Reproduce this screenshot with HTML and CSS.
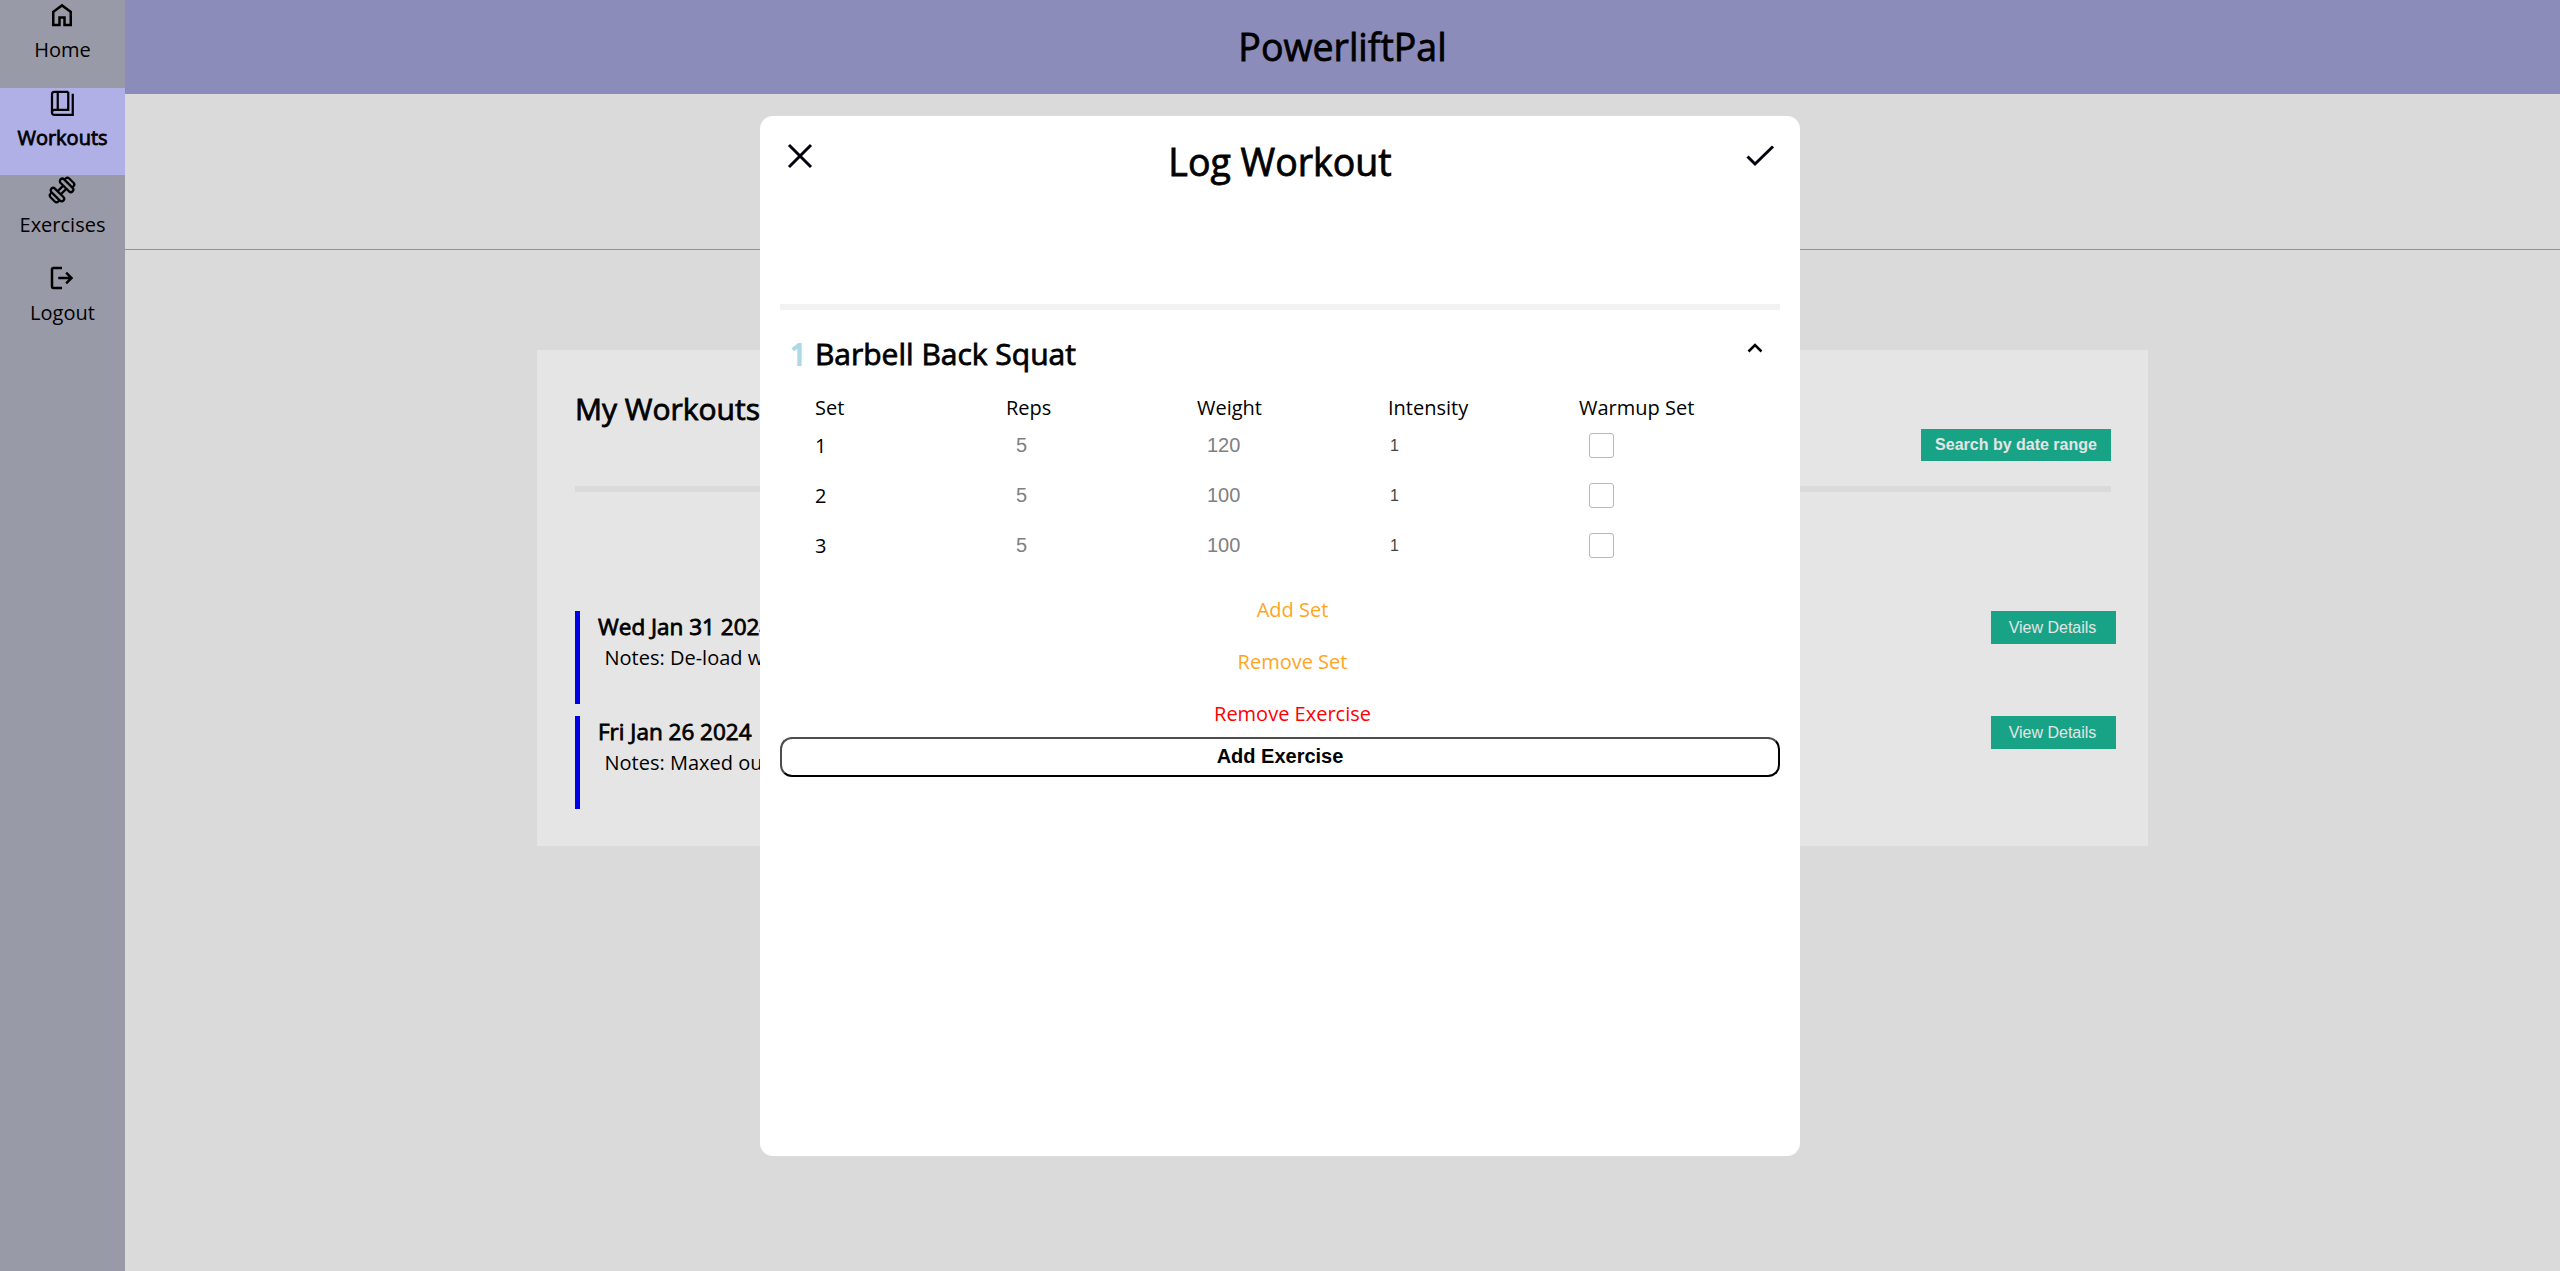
FILE: index.html
```html
<!DOCTYPE html>
<html lang="en">
<head>
<meta charset="utf-8">
<title>PowerliftPal</title>
<link rel="stylesheet" href="styles.css">
</head>
<body>
<div class="app">
  <nav class="sidebar">
    <a class="nav-item"><svg class="nav-icon" viewBox="0 0 24 24"><path d="M6 19h3v-6h6v6h3v-9l-6-4.500L6 10v9Zm-2 2V9l8-6l8 6v12h-7v-6h-2v6H4Z"/></svg><span>Home</span></a>
    <a class="nav-item active"><svg class="nav-icon line" viewBox="0 0 24 24"><path d="M17 3H6q-2 0-2 2v14.500M17 3v14.500H6q-2 0-2 2T6 21.400H20.600V4.500M8.600 3v14.500"/></svg><span>Workouts</span></a>
    <a class="nav-item"><svg class="nav-icon line" viewBox="0 0 24 24"><g transform="rotate(-45 12 12)"><rect x="4.800" y="5.200" width="4" height="13.600" rx="2"/><rect x="15.200" y="5.200" width="4" height="13.600" rx="2"/><path d="M8.800 10.200h6.400M8.800 13.800h6.400M4.800 7.600H3.400q-2 0-2 2v4.800q0 2 2 2h1.400M19.200 7.600h1.400q2 0 2 2v4.800q0 2-2 2h-1.400"/></g></svg><span>Exercises</span></a>
    <a class="nav-item"><svg class="nav-icon" viewBox="0 0 24 24"><path d="M5 21q-.825 0-1.412-.587T3 19V5q0-.825.588-1.412T5 3h7v2H5v14h7v2H5Zm11-4l-1.375-1.450l2.550-2.550H9v-2h8.175l-2.550-2.550L16 7l5 5l-5 5Z"/></svg><span>Logout</span></a>
  </nav>
  <div class="content">
    <header class="topbar"><h1>PowerliftPal</h1></header>
    <div class="toolbar"></div>
    <main class="card">
      <div class="card-head"><h2>My Workouts</h2><button class="btn search">Search by date range</button></div>
      <div class="workouts">
        <div class="workout"><div class="info"><h3>Wed Jan 31 2024</h3><p>Notes: De-load week</p></div><button class="btn view">View Details</button></div>
        <div class="workout"><div class="info"><h3>Fri Jan 26 2024</h3><p>Notes: Maxed out</p></div><button class="btn view">View Details</button></div>
      </div>
    </main>
  </div>
</div>
<section class="modal">
  <div class="modal-head">
    <svg class="head-icon" viewBox="0 0 40 40"><path d="M9 9L31 31M31 9L9 31"/></svg>
    <h1>Log Workout</h1>
    <svg class="head-icon" viewBox="0 0 40 40"><path d="M7.500 20.500l7.500 7.500L33 10.500"/></svg>
  </div>
  <div class="exercise-title"><h2><span class="num">1</span> Barbell Back Squat</h2><svg class="chevron" viewBox="0 0 16 10"><path d="M1.500 8.500L8 2l6.500 6.500"/></svg></div>
  <div class="sets head"><span>Set</span><span>Reps</span><span>Weight</span><span>Intensity</span><span>Warmup Set</span></div>
  <div class="sets row"><span>1</span><span class="value">5</span><span class="value">120</span><span class="level">1</span><span class="check"></span></div>
  <div class="sets row"><span>2</span><span class="value">5</span><span class="value">100</span><span class="level">1</span><span class="check"></span></div>
  <div class="sets row"><span>3</span><span class="value">5</span><span class="value">100</span><span class="level">1</span><span class="check"></span></div>
  <div class="actions"><a>Add Set</a><a>Remove Set</a><a class="danger">Remove Exercise</a></div>
  <button class="add">Add Exercise</button>
</section>
</body>
</html>
```

FILE: styles.css
```css
* { box-sizing: border-box; }
body { margin: 0; font: 20px/28px "Open Sans", sans-serif; color: #000; background: #dadada; overflow: hidden; }
h1, h2, h3, p { margin: 0; font-weight: 400; }
h1, h2, h3, .active span { -webkit-text-stroke: 0.8px currentColor; }
h1 { font-size: 37.5px; line-height: 52px; }
h2 { font-size: 30px; line-height: 40px; }
h3 { font-size: 22.5px; line-height: 30px; }
button { font-family: "Liberation Sans", sans-serif; padding: 0; }

.app { display: flex; height: 1271px; }
.sidebar { width: 125px; background: #999aa8; }
.nav-item { display: flex; flex-direction: column; align-items: center; height: 87.5px; gap: 6px; }
.nav-item.active { background: #b0b0e6; }
.nav-icon { width: 30px; height: 30px; margin-right: 1px; }
.line { fill: none; stroke: #000; stroke-width: 1.8; }

.content { flex: 1; }
.topbar { height: 94px; padding-top: 21px; background: #8c8cba; text-align: center; }
.toolbar { height: 156px; border-bottom: 1px solid #8c90b4; }
.card { width: 1611px; height: 496px; margin: 100px 0 0 412px; padding: 39px 37px 37px 38px; background: #e5e5e5; }
.card-head { display: flex; justify-content: space-between; align-items: flex-start; height: 103px; border-bottom: 6px solid #dadada; }
.btn { border: 0; background: #18a386; color: #e5e5e5; font-size: 16px; }
.search { width: 190px; height: 32px; margin-top: 40px; font-weight: 700; }
.workouts { display: flex; flex-direction: column; gap: 12px; margin: 119px -5px 0 0; }
.workout { display: flex; justify-content: space-between; align-items: flex-start; height: 93px; border-left: 5px solid #0000e6; }
.info { padding: 1px 0 0 18px; }
.info p { padding-left: 6.5px; margin-top: 2px; }
.view { width: 125px; height: 33px; padding-right: 2px; }

.modal { position: absolute; left: 760px; top: 116px; width: 1040px; height: 1040px; padding: 20px; border-radius: 13px; background: #fff; }
.modal-head { display: flex; justify-content: space-between; height: 174px; border-bottom: 6px solid #f2f2f2; }
.head-icon { width: 40px; height: 40px; fill: none; stroke: #00000f; stroke-width: 3; }
.exercise-title { display: flex; justify-content: space-between; margin: 24px 17px 0 10px; }
.num { color: #add8e6; -webkit-text-stroke-width: 1.8px; }
.chevron { width: 16px; height: 10px; margin-top: 9px; fill: none; stroke: #000; stroke-width: 2.5; }
.sets { display: grid; grid-template-columns: repeat(5, 191px); padding-left: 35px; }
.head { margin-top: 20px; }
.row { height: 50px; align-items: start; padding-top: 10px; }
.value { padding-left: 10px; font: 20px/27px "Liberation Sans", sans-serif; color: #808080; }
.level { padding-left: 2px; font: 16px/28px "Liberation Sans", sans-serif; color: #444; }
.check { width: 25px; height: 25px; margin: 1px 0 0 10px; border: 1px solid #b8b8b8; border-radius: 3px; }
.actions { display: flex; flex-direction: column; align-items: center; gap: 24px; padding: 24px 0 0 25px; color: #ffa51f; }
.danger { color: #f00; }
.add { display: block; width: 100%; height: 40px; margin-top: 9px; padding-bottom: 2px; background: #fff; color: #000; border: 2px solid #000; border-top-color: #4d4d4d; border-left-color: #4d4d4d; border-radius: 12px; font-size: 20px; font-weight: 700; }
```
